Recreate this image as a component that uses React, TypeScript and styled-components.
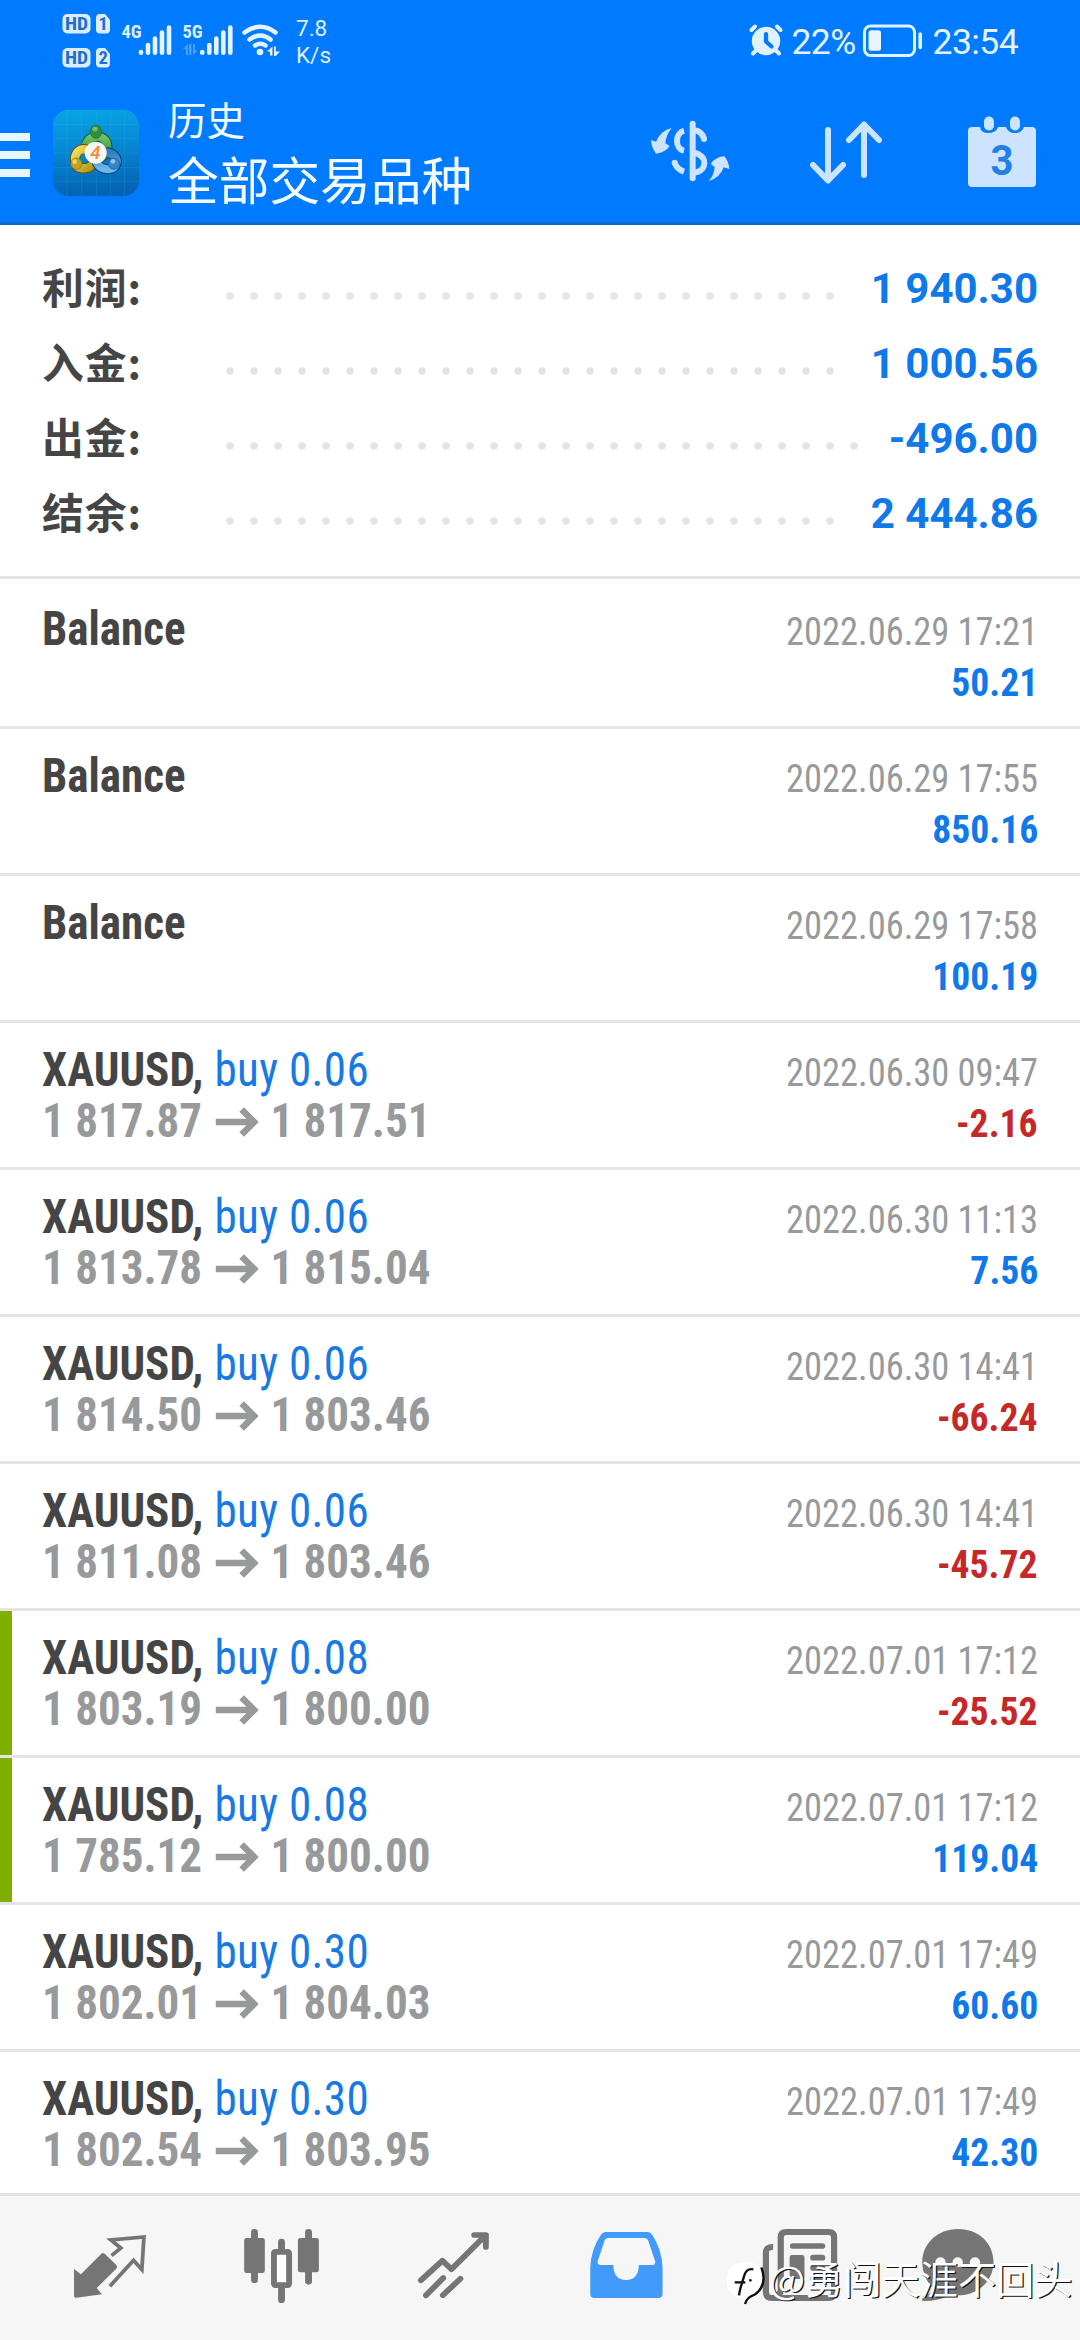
import React from 'react';
import styled, { createGlobalStyle } from 'styled-components';

const BLUE = '#007aff';
const ICE = '#cce4ff';
const CJK = "'Noto Sans CJK SC', sans-serif";

const GlobalStyle = createGlobalStyle`
  *, *::before, *::after { box-sizing: border-box; }
  body { margin: 0; background: #fff; }
`;

const Screen = styled.div`
  width: 1080px;
  height: 2340px;
  display: flex;
  flex-direction: column;
  position: relative;
  overflow: hidden;
  background: #fff;
  font-family: Roboto, ${CJK};
`;

const Top = styled.header`
  flex: none;
  height: 225px;
  background: ${BLUE};
  border-bottom: 3px solid #0f6ad0;
  color: #fff;
`;

const StatusBar = styled.div`
  height: 82px;
  display: flex;
  justify-content: space-between;
  padding: 0 62px 0 62px;
`;

const StatusGroup = styled.div`
  display: flex;
`;

const StatusSvg = styled.svg`
  display: block;
  flex: none;
`;

const NetSpeed = styled.div`
  margin: 15px 0 0 14px;
  font-size: 22.5px;
  line-height: 27px;
  color: #dff0ff;
`;

const StatusText = styled.span<{ $left: number }>`
  margin: 22px 0 0 ${(p) => p.$left}px;
  font-size: 35.5px;
  line-height: 41px;
  letter-spacing: -0.6px;
  color: #e4f4ff;
`;

const StatusSpacer = styled.span`
  width: 6px;
`;

const AppBar = styled.div`
  height: 140px;
  display: flex;
  align-items: flex-start;
  padding-right: 44px;
`;

const Hamburger = styled.div`
  width: 30px;
  margin-top: 51px;
  display: flex;
  flex-direction: column;
  gap: 10px;
`;

const HamburgerBar = styled.div`
  height: 8px;
  background: #eaf6ff;
`;

const Logo = styled.svg`
  flex: none;
  margin: 28px 0 0 23px;
`;

const Titles = styled.div`
  margin: 8px 0 0 29px;
  display: flex;
  flex-direction: column;
  font-family: ${CJK};
  color: #f4fbff;
`;

const Caption = styled.span`
  font-size: 38.5px;
  line-height: 56px;
`;

const Title = styled.span`
  font-size: 50.7px;
  line-height: 65px;
`;

const Actions = styled.div`
  margin-left: auto;
  display: flex;
  align-items: flex-start;
`;

const Action = styled.svg<{ $top: number; $gap: number }>`
  flex: none;
  margin: ${(p) => p.$top}px 0 0 ${(p) => p.$gap}px;
`;

const Summary = styled.section`
  flex: none;
  height: 354px;
  padding: 26px 42px 0;
  border-bottom: 3px solid #e5e5e5;
`;

const SummaryRow = styled.div`
  height: 75px;
  display: flex;
  align-items: flex-start;
`;

const SummaryLabel = styled.span`
  width: 176px;
  font: 700 41.8px/71px ${CJK};
  letter-spacing: 0.9px;
  color: #454545;
`;

const Dots = styled.span<{ $count: number }>`
  width: ${(p) => p.$count * 24}px;
  height: 8px;
  margin-top: 41px;
  background: radial-gradient(circle at center, #e4e4e4 3.4px, transparent 4.2px) 0 0 / 24px 8px repeat-x;
`;

const SummaryValue = styled.span`
  margin-left: auto;
  font-weight: 700;
  font-size: 42px;
  line-height: 75px;
  color: #0f79ea;
`;

const List = styled.main`
  flex: 1;
  min-height: 0;
  overflow: hidden;
  padding-top: 3px;
  font-family: 'Roboto Condensed', Roboto, sans-serif;
`;

const Deal = styled.div<{ $marked?: boolean }>`
  height: 147px;
  display: flex;
  justify-content: space-between;
  padding: 21px 42px 0;
  border-bottom: 3px solid #e5e5e5;
  background: ${(p) => (p.$marked ? 'linear-gradient(90deg, #7fb000 12px, #fff 12px)' : '#fff')};
  background-clip: padding-box;
`;

const DealSide = styled.div<{ $end?: boolean }>`
  display: flex;
  flex-direction: column;
  align-items: ${(p) => (p.$end ? 'flex-end' : 'flex-start')};
  padding-top: ${(p) => (p.$end ? 3 : 0)}px;
`;

const Line = styled.div<{ $squeeze: number; $end?: boolean }>`
  height: 51px;
  line-height: 51px;
  display: flex;
  align-items: baseline;
  white-space: pre;
  transform: scaleX(${(p) => p.$squeeze});
  transform-origin: ${(p) => (p.$end ? 'right' : 'left')} center;
`;

const Instrument = styled.span`
  font-size: 48px;
  font-weight: 700;
  color: #454545;
`;

const Volume = styled.span`
  margin-left: 12px;
  font-size: 48px;
  letter-spacing: 0.4px;
  color: #1679e4;
`;

const Price = styled.span`
  font-size: 48px;
  font-weight: 700;
  color: #97999b;
`;

const Arrow = styled.svg`
  flex: none;
  margin: 0 13px 1px 14px;
`;

const Time = styled.span`
  font-size: 39.5px;
  color: #97999b;
`;

const Profit = styled.span<{ $loss?: boolean }>`
  font-size: 39.5px;
  font-weight: 700;
  color: ${(p) => (p.$loss ? '#c62828' : '#0f79ea')};
`;

const TabBar = styled.nav`
  flex: none;
  height: 147px;
  display: flex;
  padding: 0 24px;
  border-top: 3px solid #e3e3e3;
  background: #f6f6f6;
`;

const Tab = styled.div`
  flex: 1;
  display: flex;
  justify-content: center;
  padding-top: 27px;
`;

const TabIcon = styled.svg`
  width: 90px;
  height: 90px;
  overflow: visible;
  fill: #757575;
  stroke-linecap: round;
  stroke-linejoin: round;
`;

const Watermark = styled.div`
  position: absolute;
  left: 725px;
  top: 2250px;
  display: flex;
  align-items: center;
  font: 400 38.2px/50px ${CJK};
  color: #fff;
  white-space: nowrap;
  text-shadow: 1.3px 1.3px 0.3px #111;
`;

const WatermarkMark = styled.svg`
  flex: none;
  width: 42px;
  height: 46px;
  margin: 10px 2px 0 0;
`;

const summary = [
  { label: '利润:', value: '1 940.30', dots: 26 },
  { label: '入金:', value: '1 000.56', dots: 26 },
  { label: '出金:', value: '-496.00', dots: 27 },
  { label: '结余:', value: '2 444.86', dots: 26 },
];

type DealData = {
  volume?: string;
  from?: string;
  to?: string;
  time: string;
  profit: string;
  marked?: boolean;
};

const deals: DealData[] = [
  { time: '2022.06.29 17:21', profit: '50.21' },
  { time: '2022.06.29 17:55', profit: '850.16' },
  { time: '2022.06.29 17:58', profit: '100.19' },
  { volume: '0.06', from: '1 817.87', to: '1 817.51', time: '2022.06.30 09:47', profit: '-2.16' },
  { volume: '0.06', from: '1 813.78', to: '1 815.04', time: '2022.06.30 11:13', profit: '7.56' },
  { volume: '0.06', from: '1 814.50', to: '1 803.46', time: '2022.06.30 14:41', profit: '-66.24' },
  { volume: '0.06', from: '1 811.08', to: '1 803.46', time: '2022.06.30 14:41', profit: '-45.72' },
  { volume: '0.08', from: '1 803.19', to: '1 800.00', time: '2022.07.01 17:12', profit: '-25.52', marked: true },
  { volume: '0.08', from: '1 785.12', to: '1 800.00', time: '2022.07.01 17:12', profit: '119.04', marked: true },
  { volume: '0.30', from: '1 802.01', to: '1 804.03', time: '2022.07.01 17:49', profit: '60.60' },
  { volume: '0.30', from: '1 802.54', to: '1 803.95', time: '2022.07.01 17:49', profit: '42.30' },
];

const SvgText = styled.text`
  font-family: 'Roboto Condensed', Roboto, sans-serif;
  font-weight: 700;
`;

function Bars({ x }: { x: number }) {
  return (
    <g stroke="#e4f4ff" strokeWidth="4.6" strokeLinecap="round">
      {[52, 45, 38.5, 32.5, 27.5].map((y, i) => (
        <line key={y} x1={x + i * 7} x2={x + i * 7} y1={y} y2={52.7} />
      ))}
    </g>
  );
}

function CellularStatus() {
  return (
    <StatusSvg width="220" height="82" viewBox="62 0 220 82">
      {[14, 48].map((y, i) => (
        <g key={y}>
          <rect x="62.5" y={y} width="28" height="19.5" rx="5" fill="#dcedff" />
          <path d={`M100 ${y}h5l5 6v9.500q0 4-4 4h-6q-4 0-4-4v-11.500q0-4 4-4z`} fill="#dcedff" />
          <SvgText x="65" y={y + 16.3} fontSize="18.5" fill="#1b6fd0" textLength="23" lengthAdjust="spacingAndGlyphs">HD</SvgText>
          <SvgText x="98.5" y={y + 16.3} fontSize="18.5" fill="#1b6fd0">{i + 1}</SvgText>
        </g>
      ))}
      <SvgText x="121.5" y="38.3" fontSize="18.5" fill="#dcf0ff">4G</SvgText>
      <Bars x={141} />
      <SvgText x="182.5" y="38.3" fontSize="18.5" fill="#dcf0ff">5G</SvgText>
      <path d="M183 49l5-5v11h-2v-6zM189 44h2.500v11h-2.500zM193 44v11l4.500-4.500h-2.500v-6.500z" fill="#4f9fee" />
      <Bars x={202.3} />
      <g fill="none" stroke="#e4f4ff" strokeWidth="4.5" strokeLinecap="round">
        <path d="M244.500 32.500q16-11.500 31 0" />
        <path d="M249.500 39.500q11-8 21 0" />
        <path d="M255 45.500q5.500-3.600 10.500 0" />
      </g>
      <circle cx="260" cy="52" r="3.3" fill="#e4f4ff" />
      <path d="M267 51.500l5.500-5v9h-2.500v-4zM274 46.500h1.800v5h4.200l-4.200 4.500h-1.800z" fill="#e4f4ff" />
    </StatusSvg>
  );
}

function AlarmIcon() {
  return (
    <StatusSvg width="34" height="82" viewBox="749 0 34 82">
      <g stroke="#e0f1ff" strokeWidth="4" strokeLinecap="round">
        <path d="M751.500 30l3.500-3.500M780.500 30l-3.500-3.500M753 53.500l4-4M779 53.500l-4-4" />
      </g>
      <circle cx="766" cy="41" r="14.2" fill="#e0f1ff" />
      <path d="M766 34v7.500l5.500 5" fill="none" stroke={BLUE} strokeWidth="4.2" strokeLinecap="round" strokeLinejoin="round" />
    </StatusSvg>
  );
}

function BatteryIcon() {
  return (
    <StatusSvg width="62" height="82" viewBox="861 0 62 82">
      <rect x="863.5" y="26" width="50" height="29.5" rx="6" fill="none" stroke="#e0f4ff" strokeWidth="3" />
      <rect x="867.5" y="30.3" width="12.5" height="20.5" rx="2.5" fill="#e8f5ff" />
      <path d="M919.200 34v13.500" stroke="#e0f4ff" strokeWidth="3.6" strokeLinecap="round" />
    </StatusSvg>
  );
}

function AppLogo() {
  return (
    <Logo width="86" height="86" viewBox="10 15 258 258">
      <defs>
        <linearGradient id="tile" x1="0" y1="0" x2="0.1" y2="1">
          <stop offset="0" stopColor="#08a6e6" />
          <stop offset="0.5" stopColor="#0786d2" />
          <stop offset="1" stopColor="#0463b4" />
        </linearGradient>
        <linearGradient id="green" x1="0" y1="0" x2="0" y2="1">
          <stop offset="0" stopColor="#6fc065" />
          <stop offset="1" stopColor="#2e8a3c" />
        </linearGradient>
        <linearGradient id="yellow" x1="0" y1="0" x2="1" y2="1">
          <stop offset="0" stopColor="#f0df63" />
          <stop offset="1" stopColor="#b79a1c" />
        </linearGradient>
        <linearGradient id="azure" x1="0" y1="0" x2="0" y2="1">
          <stop offset="0" stopColor="#2e7fc0" />
          <stop offset="1" stopColor="#6db8ec" />
        </linearGradient>
      </defs>
      <rect x="10" y="15" width="258" height="258" rx="46" fill="url(#tile)" />
      <path d="M52 15v258M96 15v258M140 15v258M182 15v258M224 15v258M10 58h258M10 100h258M10 144h258M10 188h258M10 230h258" stroke="#59c8f2" strokeOpacity="0.22" strokeWidth="2" />
      <g fill="none" strokeLinecap="round">
        <path d="M108 132C104 88 172 80 173 126C174 142 168 150 158 154" stroke="#14552c" strokeWidth="31" />
        <path d="M108 132C104 88 172 80 173 126C174 142 168 150 158 154" stroke="url(#green)" strokeWidth="25" />
        <path d="M108 133C68 128 68 188 94 189Q116 192 122 184" stroke="#5d5412" strokeWidth="31" />
        <path d="M108 133C68 128 68 188 94 189Q116 192 122 184" stroke="url(#yellow)" strokeWidth="25" />
        <path d="M174 142C214 152 204 192 178 192Q152 194 142 174" stroke="#0b3e75" strokeWidth="31" />
        <path d="M174 142C214 152 204 192 178 192Q152 194 142 174" stroke="url(#azure)" strokeWidth="25" />
      </g>
      <ellipse cx="139" cy="80" rx="17" ry="20" fill="#2f8f3d" stroke="#1c6b30" strokeWidth="2" />
      <ellipse cx="136" cy="72" rx="8" ry="7" fill="#8fd28d" opacity="0.7" />
      <circle cx="80" cy="176" r="17" fill="#c2a327" stroke="#7d6c15" strokeWidth="2" />
      <circle cx="75" cy="170" r="7" fill="#f1e48c" opacity="0.8" />
      <circle cx="193" cy="176" r="17" fill="#3387c9" stroke="#14538f" strokeWidth="2" />
      <circle cx="190" cy="169" r="7" fill="#a8d8f8" opacity="0.8" />
      <circle cx="138" cy="143" r="33" fill="#f8f5f1" />
      <text x="137" y="163" textAnchor="middle" fontFamily="Roboto, sans-serif" fontStyle="italic" fontWeight="500" fontSize="56" fill="#ee8a3c">4</text>
    </Logo>
  );
}

function CurrencyIcon() {
  return (
    <Action $top={38} $gap={0} width="80" height="62" viewBox="30 30 240 186" fill="none" stroke={ICE} strokeWidth="18">
      <path d="M158 41V205" strokeLinecap="round" />
      <path d="M132 62C104 70 104 116 132 122" />
      <path d="M104 158Q110 178 132 185" />
      <circle cx="104" cy="158" r="9" fill={ICE} stroke="none" />
      <path d="M160 61Q186 62 192 87" />
      <circle cx="192" cy="87" r="9" fill={ICE} stroke="none" />
      <path d="M160 128C204 134 204 184 160 188" />
      <path d="M95 54Q78 75 76 100L89 108Q76 128 48 131Q34 112 33 90L48 95Q62 62 95 54Z" fill={ICE} stroke="none" />
      <path d="M206 213Q222 196 224 171L212 162Q224 142 253 139Q266 154 268 177L251 172Q240 204 206 213Z" fill={ICE} stroke="none" />
    </Action>
  );
}

function SortIcon() {
  return (
    <Action $top={39} $gap={79} width="74" height="64" viewBox="809 121 74 64" fill="none" stroke={ICE} strokeWidth="6" strokeLinecap="round" strokeLinejoin="round">
      <path d="M828 130V180M813 165L828 180.500L843 165" />
      <path d="M864 175V125M849 140L864 124.500L879 140" />
    </Action>
  );
}

function CalendarIcon() {
  return (
    <Action $top={34} $gap={85} width="68" height="72" viewBox="968 116 68 72">
      <path d="M972 127H980Q981 133 988 133Q996 133 998 127H1006Q1008 133 1015 133Q1022 133 1024 127H1032Q1036 127 1036 131V183Q1036 187 1032 187H972Q968 187 968 183V131Q968 127 972 127Z" fill={ICE} />
      <rect x="984" y="116.5" width="10" height="14" rx="5" fill={ICE} />
      <rect x="1010" y="116.5" width="10" height="14" rx="5" fill={ICE} />
      <text x="1002" y="174.7" textAnchor="middle" fontFamily="Roboto, sans-serif" fontWeight="700" fontSize="43" textLength="23" lengthAdjust="spacingAndGlyphs" fill="#2180e6">3</text>
    </Action>
  );
}

function Tabs() {
  return (
    <TabBar>
      <Tab>
        <TabIcon viewBox="188.8 129 261.4 270" preserveAspectRatio="none">
          <path d="M215 267L235 283L293 223Q299 216 305 222L337 254Q343 260 337 267L281 324L296 343L222 353Q215 354 215 347Z" />
          <path d="M324 227L351 204L322 180L418 171L412 269L388 241L319 319" fill="none" stroke="#757575" strokeWidth="11" strokeLinecap="butt" strokeLinejoin="miter" />
        </TabIcon>
      </Tab>
      <Tab>
        <TabIcon viewBox="688.2 129 261.4 270" preserveAspectRatio="none">
          <path d="M739 157V299M896 157V304M817.500 186V214M817.500 318V359" stroke="#757575" strokeWidth="20" />
          <rect x="709" y="174" width="60" height="105" rx="7" />
          <rect x="865" y="174" width="61" height="103" rx="7" />
          <rect x="795.5" y="215.5" width="44" height="100" rx="4" fill="#fff" stroke="#757575" strokeWidth="17" />
        </TabIcon>
      </Tab>
      <Tab>
        <TabIcon viewBox="1187.7 129 261.4 270" preserveAspectRatio="none">
          <path d="M1222 301L1285 242L1311 268L1408 168M1377 165H1411V201" fill="none" stroke="#757575" strokeWidth="17" />
          <path d="M1400 160H1418V185Z" />
          <path d="M1237 346L1287 294M1286 346L1337 296" stroke="#757575" strokeWidth="17" />
        </TabIcon>
      </Tab>
      <Tab>
        <TabIcon viewBox="119.1 129 261.4 270" preserveAspectRatio="none">
          <path fill="#429bfb" fillRule="evenodd" d="M190 156H313Q321 156 326 164Q354 208 356 262V341Q356 354 343 354H158Q146 354 146 341V262Q148 208 177 164Q182 156 190 156ZM199 174Q191 174 188 181L168 242Q165 255 177 255H213Q214 300 250 300Q286 300 287 255H324Q337 255 334 242L314 181Q311 174 303 174Z" />
        </TabIcon>
      </Tab>
      <Tab>
        <TabIcon viewBox="618.5 129 261.4 270" preserveAspectRatio="none">
          <path d="M677 201Q656 200 656 218V335Q656 354 674 354H838Q854 354 854 338V172Q854 156 838 156H715Q699 156 699 172V330Q699 345 684 345" fill="none" stroke="#757575" strokeWidth="18" strokeLinecap="butt" />
          <path d="M734 198H820M793 233H820M793 264H820M793 296H820" stroke="#757575" strokeWidth="17" />
          <rect x="725" y="225" width="43" height="72" rx="7" />
        </TabIcon>
      </Tab>
      <Tab>
        <TabIcon viewBox="1118 129 261.4 270" preserveAspectRatio="none">
          <path d="M1214 147C1275 147 1317 190 1317 247C1317 304 1272 346 1214 346Q1203 346 1193 344Q1155 364 1112 363Q1107 360 1112 355Q1138 340 1139 321Q1110 292 1110 247C1110 190 1155 147 1214 147Z" />
          <g fill="#f6f6f6">
            <circle cx="1163" cy="247" r="15" />
            <circle cx="1213" cy="247" r="15" />
            <circle cx="1263" cy="247" r="15" />
          </g>
        </TabIcon>
      </Tab>
    </TabBar>
  );
}

export default function App() {
  return (
    <Screen>
      <GlobalStyle />
      <Top>
        <StatusBar>
          <StatusGroup>
            <CellularStatus />
            <NetSpeed>7.8<br />K/s</NetSpeed>
          </StatusGroup>
          <StatusGroup>
            <AlarmIcon />
            <StatusText $left={8}>22%</StatusText>
            <StatusSpacer />
            <BatteryIcon />
            <StatusText $left={9}>23:54</StatusText>
          </StatusGroup>
        </StatusBar>
        <AppBar>
          <Hamburger>
            <HamburgerBar />
            <HamburgerBar />
            <HamburgerBar />
          </Hamburger>
          <AppLogo />
          <Titles>
            <Caption>历史</Caption>
            <Title>全部交易品种</Title>
          </Titles>
          <Actions>
            <CurrencyIcon />
            <SortIcon />
            <CalendarIcon />
          </Actions>
        </AppBar>
      </Top>
      <Summary>
        {summary.map((s) => (
          <SummaryRow key={s.label}>
            <SummaryLabel>{s.label}</SummaryLabel>
            <Dots $count={s.dots} />
            <SummaryValue>{s.value}</SummaryValue>
          </SummaryRow>
        ))}
      </Summary>
      <List>
        {deals.map((d, i) => (
          <Deal key={i} $marked={d.marked}>
            <DealSide>
              <Line $squeeze={0.938}>
                <Instrument>{d.volume ? 'XAUUSD,' : 'Balance'}</Instrument>
                {d.volume && <Volume>buy {d.volume}</Volume>}
              </Line>
              {d.from && (
                <Line $squeeze={0.938}>
                  <Price>{d.from}</Price>
                  <Arrow width="46" height="30" viewBox="0 0 43 30" preserveAspectRatio="none" fill="none" stroke="#97999b" strokeWidth="6.5">
                    <path d="M0 15H38M26 2.500L38.500 15L26 27.500" />
                  </Arrow>
                  <Price>{d.to}</Price>
                </Line>
              )}
            </DealSide>
            <DealSide $end>
              <Line $squeeze={0.923} $end><Time>{d.time}</Time></Line>
              <Line $squeeze={0.953} $end><Profit $loss={d.profit.startsWith('-')}>{d.profit}</Profit></Line>
            </DealSide>
          </Deal>
        ))}
      </List>
      <Tabs />
      <Watermark>
        <WatermarkMark viewBox="15 130 126 138">
          <path d="M75 137Q130 137 132 190Q130 236 86 248L75 264L72 246Q20 240 20 190Q22 137 75 137Z" fill="#fff" />
          <path d="M124 152Q144 206 104 234Q80 242 75 262" fill="none" stroke="#111" strokeWidth="7" />
          <path d="M100 158Q80 154 73 176L62 212Q58 228 57 236M44 197H76" fill="none" stroke="#111" strokeWidth="7" />
          <circle cx="91" cy="191" r="4" fill="#111" />
        </WatermarkMark>
        @勇闯天涯不回头
      </Watermark>
    </Screen>
  );
}
